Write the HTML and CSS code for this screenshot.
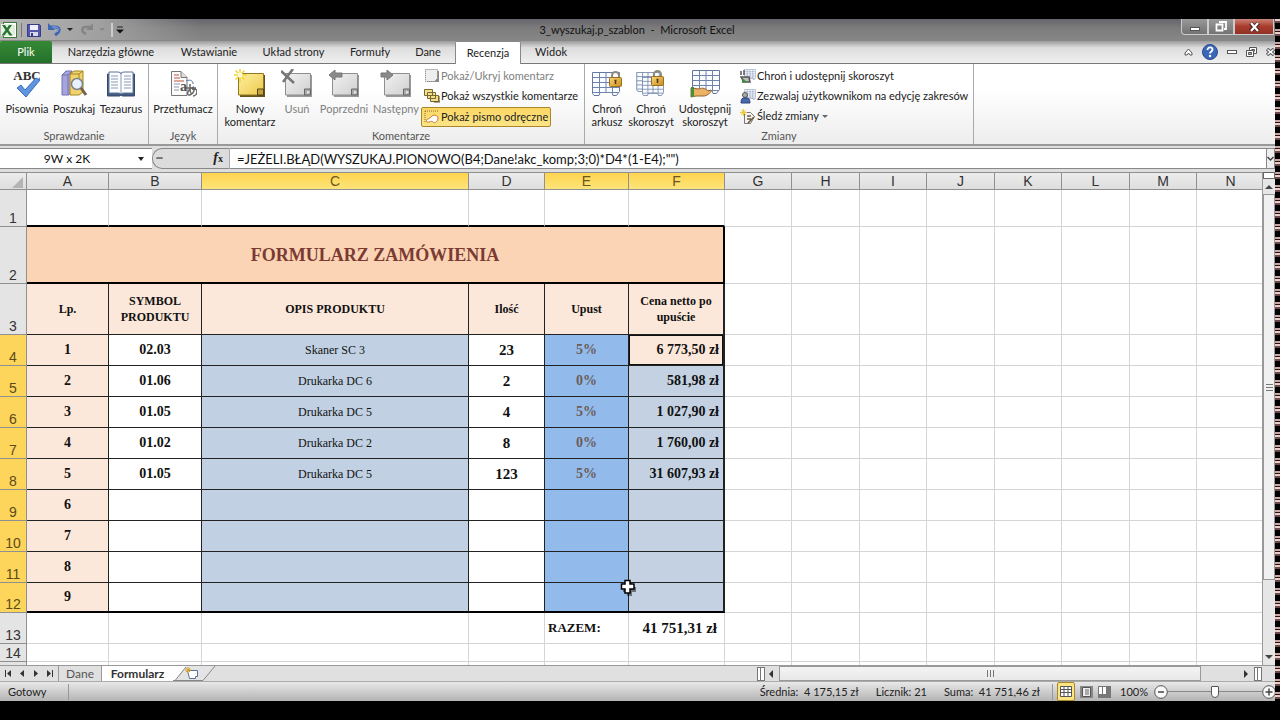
FILE: index.html
```html
<!DOCTYPE html>
<html lang="pl">
<head>
<meta charset="utf-8">
<title>3_wyszukaj.p_szablon - Microsoft Excel</title>
<link rel="stylesheet" href="styles.css">
</head>
<body>
<svg class="defs" width="0" height="0" aria-hidden="true">
  <defs>
    <linearGradient id="gNote" x1="0" y1="0" x2="1" y2="1"><stop offset="0" stop-color="#fdf0a0"/><stop offset="1" stop-color="#edc84c"/></linearGradient>
    <linearGradient id="gGrey" x1="0" y1="0" x2="1" y2="1"><stop offset="0" stop-color="#f2f2f2"/><stop offset="1" stop-color="#cfcfcf"/></linearGradient>
    <linearGradient id="gLock" x1="0" y1="0" x2="1" y2="1"><stop offset="0" stop-color="#f8d878"/><stop offset="1" stop-color="#c98c1c"/></linearGradient>
    <symbol id="note-grey" viewBox="0 0 32 30">
      <path d="M6 6h25v22H6z" fill="#999"/><path d="M4.500 4.500h25v16l-5.500 5.500H4.500z" fill="url(#gGrey)" stroke="#8f8f8f"/><path d="M23.500 26v-6h6v6z" fill="#aaa" stroke="#666"/><path d="M26 22l3 1-3 2" fill="#eee"/>
    </symbol>
    <symbol id="lock" viewBox="0 0 13 16">
      <path d="M3 8V4.500a3.500 3.500 0 0 1 7 0V8" fill="none" stroke="#8c8c7c" stroke-width="2"/><rect x=".5" y="6.500" width="12" height="9" rx="1" fill="url(#gLock)" stroke="#9b6f1e"/><path d="M6.500 9v4M5.500 9.500h2" stroke="#4c3510" stroke-width="1.500"/>
    </symbol>
    <symbol id="sheet" viewBox="0 0 28 24">
      <path d="M.5.5h27v19l-3 4H21l-1-3H8l-1 3H2l-1.500-2z" fill="#fbfcff" stroke="#6478a0"/><path d="M7.500.5v20M14 .5v20M20.500.5v20M.5 5.500h27M.5 10.500h27M.5 15.500h27M1 20.500h26" stroke="#6f84ac"/>
    </symbol>
  </defs>
</svg>

<div class="screen">
<div class="app">
  <header class="titlebar">
    <div class="quick">
      <svg class="xl" width="16" height="16" viewBox="0 0 16 16"><rect x="2.500" y=".5" width="13" height="15" fill="#fff" stroke="#3b7a3b"/><rect y="2" width="12" height="12" fill="#e3f1df"/><path d="M1 3h3l2 3 2-3h3L7.500 8l4 5.500h-3L6 10l-2.500 3.500h-3L4.500 8z" fill="#277430"/><path d="M13 3v10" stroke="#bbd9b4"/></svg>
      <span class="sep"></span>
      <button class="qb" aria-label="Zapisz"><svg width="14" height="14" viewBox="0 0 14 14"><path d="M.5 1.500h12l1 1v11H.5z" fill="#5458ad" stroke="#383b85"/><rect x="3" y="2" width="8" height="5" fill="#eef"/><rect x="3" y="9" width="8" height="4" fill="#d6d8ee"/><rect x="4" y="10" width="2" height="3" fill="#383b85"/></svg></button>
      <button class="qb undo" aria-label="Cofnij"><svg width="14" height="13" viewBox="0 0 14 13"><path d="M3 4h4c6 0 5 5 0 8" fill="none" stroke="#3f67b4" stroke-width="3"/><path d="M0 0v7h7z" fill="#3f67b4"/><path d="M4 4h3c4 0 4 3 2 5" fill="none" stroke="#8fb1e6"/></svg></button>
      <span class="tri"></span>
      <button class="qb redo" aria-label="Ponów"><svg width="14" height="13" viewBox="0 0 14 13"><path d="M10 4H7C1 3 1 9 6 11" fill="none" stroke="#858585" stroke-width="2.500"/><path d="M13 0v7H6z" fill="#858585"/></svg></button>
      <span class="tri dim"></span>
      <span class="sep light"></span>
      <button class="qb more" aria-label="Dostosuj pasek"><svg width="8" height="8" viewBox="0 0 8 8"><path d="M1 1h6" stroke="#222"/><path d="M0 3.500h8l-4 4z" fill="#111"/></svg></button>
    </div>
    <div class="doc-title">3_wyszukaj.p_szablon&nbsp; -&nbsp; Microsoft Excel</div>
    <div class="winbtns">
      <button aria-label="Minimalizuj"><svg width="12" height="10" viewBox="0 0 12 10"><rect x="1.500" y="5.500" width="9" height="3" fill="#fff" stroke="#555"/></svg></button>
      <button aria-label="Przywróć"><svg width="12" height="12" viewBox="0 0 12 12"><path d="M4 1h7v7H9M1.500 3.500h6v6h-6z" fill="none" stroke="#fff" stroke-width="1.800"/></svg></button>
      <button class="close" aria-label="Zamknij"><svg width="11" height="10" viewBox="0 0 11 10"><path d="M1.500 1l8 8M9.500 1l-8 8" stroke="#4a2020" stroke-width="4"/><path d="M2 1l7 8M9 1L2 9" stroke="#fff" stroke-width="2.200"/></svg></button>
    </div>
  </header>

  <nav class="tabs">
    <button class="file">Plik</button>
    <button class="t1">Narzędzia główne</button>
    <button class="t2">Wstawianie</button>
    <button class="t3">Układ strony</button>
    <button class="t4">Formuły</button>
    <button class="t5">Dane</button>
    <button class="active">Recenzja</button>
    <button class="t6">Widok</button>
    <div class="tabtools">
      <button aria-label="Zwiń wstążkę"><svg width="9" height="8" viewBox="0 0 9 8"><path d="M1 5l3.500-4L8 5v2H6L4.500 5 3 7H1z" fill="#fff" stroke="#555"/></svg></button>
      <button aria-label="Pomoc"><svg width="16" height="16" viewBox="0 0 16 16"><circle cx="8" cy="8" r="7.500" fill="#3b67b8" stroke="#294b8c"/><path d="M5.500 6c0-3.500 5-3.200 5-.3C10.500 7.500 8 7.500 8 9.600" fill="none" stroke="#fff" stroke-width="1.800"/><circle cx="8" cy="12" r="1.200" fill="#fff"/></svg></button>
      <button aria-label="Minimalizuj skoroszyt"><svg width="10" height="6" viewBox="0 0 10 6"><rect x=".5" y="1.500" width="9" height="3" fill="#fff" stroke="#555"/></svg></button>
      <button aria-label="Przywróć skoroszyt"><svg width="11" height="10" viewBox="0 0 11 10"><path d="M3.500.5h7v6h-7z" fill="#fff" stroke="#555"/><path d="M5.500 2.500h3v2" fill="none" stroke="#555"/><path d="M.5 3.500h7v6h-7z" fill="#fff" stroke="#555"/><path d="M2.500 5.500h3v2h-3z" fill="#bbb" stroke="#555"/></svg></button>
      <button aria-label="Zamknij skoroszyt"><svg width="9" height="8" viewBox="0 0 9 8"><path d="M1 1l7 6M8 1L1 7" stroke="#555" stroke-width="3.400"/><path d="M1.500 1.500l6 5M7.500 1.500l-6 5" stroke="#fff" stroke-width="1.500"/></svg></button>
    </div>
  </nav>

  <section class="ribbon">
    <div class="group g1">
      <div class="items">
        <button class="big w54"><svg width="28" height="30" viewBox="0 0 28 30"><text x="14" y="11" class="abc">ABC</text><path d="M4 19l4-3 4 5L23 9l4 2-14 17z" fill="#5f94de" stroke="#3d6fc0"/></svg><span>Pisownia</span></button>
        <button class="big w40"><svg width="28" height="30" viewBox="0 0 28 30"><path d="M2 6l4-4h6v20l-3 4H2z" fill="#a6a4dc" stroke="#7370b4"/><path d="M2 6h6v19M8 6l4-4" fill="none" stroke="#7370b4"/><path d="M10 5l4-3h9v21l-4 3h-9z" fill="#f0d36a" stroke="#a68624"/><path d="M10 5h9l4-3M19 5v8" fill="none" stroke="#a68624"/><circle cx="17" cy="15" r="5.500" fill="#e8f2fc" stroke="#7d838c" stroke-width="1.500"/><path d="M21 19l5 7" stroke="#74624a" stroke-width="3"/></svg><span>Poszukaj</span></button>
        <button class="big w54"><svg width="30" height="30" viewBox="0 0 30 30"><path d="M1.500 5v22h12l1.500-1 1.500 1h12V5z" fill="#435981" stroke="#35486b"/><path d="M3 3h9q3 0 3 2 0-2 3-2h9v21h-9q-3 0-3 1 0-1-3-1H3z" fill="#fcfdff" stroke="#60749b"/><path d="M15 5v20M5 7h7M5 10h7M5 13h7M5 16h7M5 19h7M18 7h7M18 10h7M18 13h7M18 16h7M18 19h7" stroke="#8c9ab2"/></svg><span>Tezaurus</span></button>
      </div>
      <div class="caption">Sprawdzanie</div>
    </div>
    <div class="group g2">
      <div class="items">
        <button class="big w68"><svg width="28" height="30" viewBox="0 0 28 30"><path d="M2.500 2.500H12l6 6v18H2.500z" fill="#fcfcfc" stroke="#777"/><path d="M12 2.500v6h6" fill="#ddd" stroke="#777"/><path d="M5 6h5M5 9h6M5 12h10" stroke="#c45038"/><path d="M5 15h6M5 18h5M5 21h5" stroke="#8696b8"/><text x="11" y="22" class="lat">a</text><path d="M17 19h10M21 15c0 7 0 9 2 10M25 18c-7 2-8 9-4 8s5-7 3-6 4-1 4 2-2 5-4 5" fill="none" stroke="#666" stroke-width="1.500"/><path d="M17 12c5-2 7 0 7 3" fill="none" stroke="#567aa8"/></svg><span>Przetłumacz</span></button>
      </div>
      <div class="caption">Język</div>
    </div>
    <div class="group g3">
      <div class="items">
        <button class="big w64"><svg width="32" height="30" viewBox="0 0 32 30"><path d="M6 6h25v22H6z" fill="#61521f"/><path d="M4.500 4.500h25v16l-5.500 5.500H4.500z" fill="url(#gNote)" stroke="#92771e"/><path d="M23.500 26v-6h6v6z" fill="#c7a23a" stroke="#554512"/><path d="M6 0v13M0 6h13M1.500 1.500l9 9M10.500 1.500l-9 9" stroke="#f5d43a" stroke-width="1.500"/><circle cx="6" cy="6" r="2.500" fill="#fffbd0"/></svg><span>Nowy<br>komentarz</span></button>
        <button class="big w30 off"><svg width="32" height="30" viewBox="0 0 32 30"><use href="#note-grey"/><path d="M0 2l13 12M12 0L2 13" stroke="#777" stroke-width="2.500"/></svg><span>Usuń</span></button>
        <button class="big w64 off"><svg width="32" height="30" viewBox="0 0 32 30"><use href="#note-grey"/><path d="M1 6l6-5v3h7v4H7v3z" fill="#8b8b8b" stroke="#777"/></svg><span>Poprzedni</span></button>
        <button class="big w40 off"><svg width="32" height="30" viewBox="0 0 32 30"><use href="#note-grey"/><path d="M13 6L7 1v3H1v4h6v3z" fill="#8b8b8b" stroke="#777"/></svg><span>Następny</span></button>
        <div class="stack">
          <button class="small off"><svg width="16" height="14" viewBox="0 0 16 14"><path d="M3 2h12v11H3z" fill="#888"/><path d="M1.500.5h12v9l-3 3h-9z" fill="#eee" stroke="#777" stroke-dasharray="1 1"/></svg>Pokaż/Ukryj komentarz</button>
          <button class="small"><svg width="16" height="14" viewBox="0 0 16 14"><path d="M.5.500h8v6h-8zM3.500 3.500h8v6h-8zM6.500 6.500h8v6h-8z" fill="#f4e08c" stroke="#76682f"/><path d="M10 13h6V7" fill="none" stroke="#5a4e1c"/></svg>Pokaż wszystkie komentarze</button>
          <button class="small pressed"><svg width="16" height="14" viewBox="0 0 16 14"><path d="M1 1h13M1 1v12" stroke="#8d6c2a" stroke-dasharray="1 1"/><path d="M3 12c-2-4 2-2 4-5s7-2 7 1-3 6-5 4-4 1-6 0z" fill="#fff" stroke="#c67b3c"/></svg>Pokaż pismo odręczne</button>
        </div>
      </div>
      <div class="caption">Komentarze</div>
    </div>
    <div class="group g4">
      <div class="items">
        <button class="big w44"><svg width="30" height="30" viewBox="0 0 30 30"><use href="#sheet" y="3" width="28" height="24"/><use href="#lock" x="17" y="2" width="13" height="16"/></svg><span>Chroń<br>arkusz</span></button>
        <button class="big w44"><svg width="30" height="30" viewBox="0 0 30 30"><use href="#sheet" y="3" width="24" height="20"/><use href="#sheet" x="6" y="8" width="22" height="19"/><use href="#lock" x="15" y="1" width="13" height="16"/></svg><span>Chroń<br>skoroszyt</span></button>
        <button class="big w64"><svg width="30" height="30" viewBox="0 0 30 30"><use href="#sheet" x="2" width="28" height="26"/><path d="M1 19l8 1c4-2 7 0 9 2l3-1c2 1-4 6-7 6H6l-5 1z" fill="#ecb366" stroke="#97622b"/><path d="M1 18h3v10H1z" fill="#44933a"/></svg><span>Udostępnij<br>skoroszyt</span></button>
        <div class="stack">
          <button class="small"><svg width="16" height="15" viewBox="0 0 16 15"><use href="#sheet" x="4" width="12" height="11"/><path d="M1 2v4M4 1v5M1 8h8l1 5H4z" stroke="#555" stroke-width="1.500" fill="#bbb"/><path d="M2 9l5 4-5 1z" fill="#3d8a43"/></svg>Chroń i udostępnij skoroszyt</button>
          <button class="small"><svg width="16" height="15" viewBox="0 0 16 15"><use href="#sheet" x="4" width="12" height="11"/><circle cx="5" cy="6" r="2.500" fill="#aaa" stroke="#555"/><path d="M1 14q0-6 4-5 5-1 5 5z" fill="#4868ac" stroke="#2d427a"/></svg>Zezwalaj użytkownikom na edycję zakresów</button>
          <button class="small"><svg width="16" height="15" viewBox="0 0 16 15"><path d="M4.500 3.500h6l4 4-4 7h-6z" fill="#f4f4f4" stroke="#777"/><path d="M7 7h4M7 10h4M8 14l6-6" stroke="#6b5b38" stroke-width="1.500"/><path d="M3.500 0v7M0 3.500h7M1 1l5 5M6 1L1 6" stroke="#ecc93b"/></svg>Śledź zmiany<i class="tri small-tri"></i></button>
        </div>
      </div>
      <div class="caption">Zmiany</div>
    </div>
  </section>

  <section class="formula">
    <input class="namebox" aria-label="Pole nazwy" value="9W x 2K">
    <span class="name-tri"></span>
    <div class="fxarea"><span class="knob"></span><button class="fx" aria-label="Wstaw funkcję"><i>f</i><sub>x</sub></button></div>
    <input class="finput" aria-label="Pasek formuły" value="=JEŻELI.BŁĄD(WYSZUKAJ.PIONOWO(B4;Dane!akc_komp;3;0)*D4*(1-E4);&quot;&quot;)">
    <button class="expand" aria-label="Rozwiń"><svg width="7" height="6" viewBox="0 0 7 6"><path d="M.5 1l3 3 3-3" fill="none" stroke="#444" stroke-width="1.500"/></svg></button>
  </section>

  <main class="work">
    <div class="gridwrap">
    <table class="grid">
      <colgroup><col class="c-h"><col class="c-a"><col class="c-b"><col class="c-c"><col class="c-d"><col class="c-e"><col class="c-f"><col class="c-g"><col class="c-w"><col class="c-g"><col class="c-w"><col class="c-g"><col class="c-w"><col class="c-g"><col class="c-w"></colgroup>
      <thead><tr><th class="corner"><svg width="11" height="11" viewBox="0 0 11 11"><path d="M11 0v11H0z" fill="#b4b4b4"/></svg></th><th>A</th><th>B</th><th class="on">C</th><th>D</th><th class="on">E</th><th class="on">F</th><th>G</th><th>H</th><th>I</th><th>J</th><th>K</th><th>L</th><th>M</th><th>N</th></tr></thead>
      <tbody>
        <tr class="r1"><th>1</th><td></td><td></td><td></td><td></td><td></td><td></td><td></td><td></td><td></td><td></td><td></td><td></td><td></td><td></td></tr>
        <tr class="r2"><th>2</th><td colspan="6" class="ftitle">FORMULARZ ZAMÓWIENIA</td><td></td><td></td><td></td><td></td><td></td><td></td><td></td><td></td></tr>
        <tr class="r3"><th>3</th><td>Lp.</td><td>SYMBOL PRODUKTU</td><td>OPIS PRODUKTU</td><td>Ilość</td><td>Upust</td><td>Cena netto po upuście</td><td></td><td></td><td></td><td></td><td></td><td></td><td></td><td></td></tr>
        <tr class="d"><th>4</th><td>1</td><td>02.03</td><td>Skaner SC 3</td><td>23</td><td>5%</td><td class="cur">6 773,50 zł</td><td></td><td></td><td></td><td></td><td></td><td></td><td></td><td></td></tr>
        <tr class="d"><th>5</th><td>2</td><td>01.06</td><td>Drukarka DC 6</td><td>2</td><td>0%</td><td>581,98 zł</td><td></td><td></td><td></td><td></td><td></td><td></td><td></td><td></td></tr>
        <tr class="d"><th>6</th><td>3</td><td>01.05</td><td>Drukarka DC 5</td><td>4</td><td>5%</td><td>1 027,90 zł</td><td></td><td></td><td></td><td></td><td></td><td></td><td></td><td></td></tr>
        <tr class="d"><th>7</th><td>4</td><td>01.02</td><td>Drukarka DC 2</td><td>8</td><td>0%</td><td>1 760,00 zł</td><td></td><td></td><td></td><td></td><td></td><td></td><td></td><td></td></tr>
        <tr class="d"><th>8</th><td>5</td><td>01.05</td><td>Drukarka DC 5</td><td>123</td><td>5%</td><td>31 607,93 zł</td><td></td><td></td><td></td><td></td><td></td><td></td><td></td><td></td></tr>
        <tr class="d"><th>9</th><td>6</td><td></td><td></td><td></td><td></td><td></td><td></td><td></td><td></td><td></td><td></td><td></td><td></td><td></td></tr>
        <tr class="d"><th>10</th><td>7</td><td></td><td></td><td></td><td></td><td></td><td></td><td></td><td></td><td></td><td></td><td></td><td></td><td></td></tr>
        <tr class="d"><th>11</th><td>8</td><td></td><td></td><td></td><td></td><td></td><td></td><td></td><td></td><td></td><td></td><td></td><td></td><td></td></tr>
        <tr class="d last"><th>12</th><td>9</td><td></td><td></td><td></td><td></td><td class="pointer-cell"><svg class="pointer" width="18" height="18" viewBox="0 0 18 18"><path d="M7 4h5v4h4v5h-4v4H7v-4H3V8h4z" fill="#000" opacity=".45"/><path d="M5 1.500h5V5h4v5h-4v4H5v-4H1.500V5H5z" fill="#fff" stroke="#000" stroke-width="1.500"/></svg></td><td></td><td></td><td></td><td></td><td></td><td></td><td></td><td></td></tr>
        <tr class="r13"><th>13</th><td></td><td></td><td></td><td></td><td class="sumlabel">RAZEM:</td><td class="sum">41 751,31 zł</td><td></td><td></td><td></td><td></td><td></td><td></td><td></td><td></td></tr>
        <tr class="r14"><th>14</th><td></td><td></td><td></td><td></td><td></td><td></td><td></td><td></td><td></td><td></td><td></td><td></td><td></td><td></td></tr>
        <tr class="r15"><th></th><td></td><td></td><td></td><td></td><td></td><td></td><td></td><td></td><td></td><td></td><td></td><td></td><td></td><td></td></tr>
      </tbody>
    </table>
    </div>
    <div class="vscroll"><span class="split"></span><button class="arrow up" aria-label="W górę"></button><div class="vthumb"><i></i></div><button class="arrow down" aria-label="W dół"></button></div>
  </main>

  <footer class="sheetbar">
    <div class="navs">
      <button aria-label="Pierwszy"><svg width="8" height="7" viewBox="0 0 8 7"><path d="M1 0h1v7H1zM7 0v7L3 3.500z" fill="#333"/></svg></button>
      <button aria-label="Poprzedni arkusz"><svg width="8" height="7" viewBox="0 0 8 7"><path d="M6 0v7L2 3.500z" fill="#333"/></svg></button>
      <button aria-label="Następny arkusz"><svg width="8" height="7" viewBox="0 0 8 7"><path d="M2 0v7l4-3.500z" fill="#333"/></svg></button>
      <button aria-label="Ostatni"><svg width="8" height="7" viewBox="0 0 8 7"><path d="M6 0h1v7H6zM1 0v7l4-3.500z" fill="#333"/></svg></button>
    </div>
    <button class="stab">Dane</button>
    <button class="stab sel">Formularz</button>
    <button class="newsheet" aria-label="Wstaw arkusz"><svg width="43" height="16" viewBox="0 0 43 16"><path d="M0 0h42L30 14.500H2L13 0z" fill="#e4e4e4"/><path d="M0 0h13L2 14.500H0z" fill="#fff"/><path d="M0 14.500h2L13 1M2 14.500h28L42 0" fill="none" stroke="#888"/><path d="M14.500 4.500h10v6h-2v2h-6z" fill="#fff" stroke="#5c6f9a"/><path d="M15 1v6M12 4h6M13 2l4 4M17 2l-4 4" stroke="#d9a520"/></svg></button>
    <div class="hscroll"><span class="vsplit"></span><button class="arrow left" aria-label="W lewo"></button><div class="hthumb"><i></i></div><button class="arrow right" aria-label="W prawo"></button><span class="vsplit"></span></div>
  </footer>

  <footer class="status">
    <span class="ready">Gotowy</span>
    <div class="stats"><span>Średnia:&nbsp; 4 175,15 zł</span><span>Licznik: 21</span><span>Suma:&nbsp; 41 751,46 zł</span></div>
    <div class="views">
      <button class="vsel" aria-label="Normalny"><svg width="12" height="11" viewBox="0 0 12 11"><path d="M.5.5h11v10H.5zM.5 3.500h11M.5 6.500h11M4 .5v10M8 .5v10" fill="#fff" stroke="#555"/></svg></button>
      <button aria-label="Układ strony"><svg width="13" height="12" viewBox="0 0 13 12"><path fill="#888" d="M0 0h13v12H0z"/><path d="M2.500 1.500h8v9h-8z" fill="#eee" stroke="#555"/><path d="M5 4h4M5 6h4M5 8h4" stroke="#666"/></svg></button>
      <button aria-label="Podział stron"><svg width="13" height="12" viewBox="0 0 13 12"><path fill="#777" d="M0 0h13v12H0z"/><path d="M1 1h3v7H1zM5 1h3v7H5z" fill="#fff"/></svg></button>
    </div>
    <span class="pct">100%</span>
    <button class="round" aria-label="Pomniejsz"><svg width="14" height="14" viewBox="0 0 14 14"><circle cx="7" cy="7" r="6.300" fill="#f8f8f8" stroke="#555"/><path d="M4 7h6" stroke="#444" stroke-width="1.500"/></svg></button>
    <input class="zoom" type="range" min="0" max="100" value="50" aria-label="Powiększenie">
    <button class="round plus" aria-label="Powiększ"><svg width="14" height="14" viewBox="0 0 14 14"><circle cx="7" cy="7" r="6.300" fill="#f8f8f8" stroke="#555"/><path d="M3.500 7h7M7 3.500v7" stroke="#444" stroke-width="1.500"/></svg></button>
  </footer>
</div>
<div class="edge"></div>
</div>
</body>
</html>
```
FILE: styles.css
```css
* { box-sizing: border-box; }
body { margin: 0; background: #000; font: 11px/16px Lato, "Open Sans", sans-serif; color: #222; }
button, input { font: inherit; color: inherit; margin: 0; padding: 0; border: 0; background: none; border-radius: 0; }
button { white-space: nowrap; }
svg { display: block; flex: none; }
.defs { position: absolute; }
.screen { display: flex; min-height: 100vh; padding: 19px 0; overflow: hidden; }
.app { flex: 1; min-width: 0; display: flex; flex-direction: column; background: #e6e6e6; overflow: hidden; }
.edge { width: 5px; background: repeating-linear-gradient(#e8cfc8 0 2px, #70484c 2px 4px, #000 4px 10px, #c9a7a7 10px 12px, #2a1010 12px 13px); }

.titlebar { display: flex; align-items: flex-start; height: 22px; background: linear-gradient(#64646c, #7c7c7c 40%, #878787); }
.quick { display: flex; align-items: center; height: 21px; flex: 1; background: linear-gradient(90deg, #b4b4b4, #a0a0a0 100px, transparent 200px); }
.xl { margin-left: 1px; }
.sep { width: 1px; height: 14px; margin: 0 5px 0 4px; background: #777; }
.sep.light { width: 2px; margin: 0 3px 0 6px; background: #ccc; }
.undo { margin-left: 7px; }
.tri { width: 0; height: 0; border: 3px solid transparent; border-top: 3px solid #222; border-bottom: 0; margin-left: 5px; }
.redo { margin-left: 7px; }
.dim { border-top-color: #888; }
.doc-title { line-height: 22px; color: #111; }
.winbtns { display: flex; flex: 1; justify-content: flex-end; padding-right: 1px; }
.winbtns button { display: flex; align-items: center; justify-content: center; width: 26px; height: 16px; border: 1px solid #ccc; border-top: 0; background: linear-gradient(#999, #737373); }
.winbtns button:first-child { border-bottom-left-radius: 4px; width: 27px; }
.winbtns .close { width: 40px; background: linear-gradient(#c98478, #a93b2b 50%, #8f3327); }

.tabs { display: flex; align-items: stretch; height: 23px; border-bottom: 1px solid #777; background: linear-gradient(#9a9a9a, #dcdcdc 30%, #f0f0f0); }
.tabs > button { text-align: center; }
.file { width: 52px; background: linear-gradient(#358a35, #25702b); color: #fff; margin-right: 7px; border-radius: 2px 2px 0 0; }
.t1 { width: 104px; }
.t2 { width: 92px; }
.t3 { width: 77px; }
.t4 { width: 76px; }
.t5 { width: 40px; margin-right: 7px; }
.tabs .active { width: 66px; background: #fff; border: 1px solid #888; border-bottom: 0; border-radius: 2px 2px 0 0; margin-bottom: -1px; }
.t6 { width: 60px; }
.tabtools { display: flex; align-items: center; gap: 9px; margin-left: auto; }

.ribbon { display: flex; height: 82px; background: linear-gradient(#fff 30%, #ededed); border-bottom: 2px solid #999; }
.group { display: flex; flex-direction: column; border-right: 1px solid #aaa; }
.g1 { width: 149px; }
.g2 { width: 69px; }
.g3 { width: 367px; }
.g4 { width: 389px; }
.items { display: flex; flex: 1; }
.big { display: flex; flex: none; flex-direction: column; align-items: center; padding-top: 5px; line-height: 13px; text-align: center; gap: 3px; }
.off { color: #808080; }
.w30 { width: 30px; }
.w40 { width: 40px; }
.w44 { width: 44px; }
.w54 { width: 54px; }
.w64 { width: 64px; }
.w68 { width: 68px; }
.caption { line-height: 16px; text-align: center; color: #555; }
.abc { font: bold 13px "Liberation Serif", serif; text-anchor: middle; fill: #333; }
.lat { font: bold 14px "Liberation Serif", serif; fill: #555; }
.stack { display: flex; flex-direction: column; align-items: flex-start; padding: 2px 0 0 5px; }
.g4 .stack { padding-left: 0; }
.small { display: flex; align-items: center; gap: 1px; height: 20px; padding: 0 2px; border: 1px solid transparent; border-radius: 2px; }
.pressed { background: linear-gradient(#fbd663, #fce587); border-color: #a98728; margin-top: 1px; }
.small-tri { border-top-color: #666; margin-left: 2px; }

.formula { display: flex; height: 26px; padding: 2px 0 3px; background: #dedede; }
.namebox { width: 134px; text-align: center; background: #fff; font-size: 12px; color: #111; border-top: 1px solid #888; border-bottom: 1px solid #888; }
.name-tri { width: 18px; border: solid #888; border-width: 1px 0; background: #fff; display: flex; align-items: center; }
.name-tri::before { content: ""; margin-left: 4px; border: 3px solid transparent; border-top: 4px solid #222; border-bottom: 0; }
.fxarea { display: flex; align-items: center; width: 78px; border: 1px solid #888; border-right-color: #aaa; border-radius: 10px 0 0 10px; background: #dcdcdc; }
.knob { width: 7px; height: 3px; margin-left: 3px; border-top: 2px solid #777; border-radius: 2px; }
.fx { margin-left: auto; margin-right: 6px; font: bold 14px/18px "Liberation Serif", serif; }
.fx sub { font-size: 10px; vertical-align: baseline; }
.finput { flex: 1; min-width: 0; padding-left: 7px; background: #fff; font-size: 13px; color: #111; border: solid #888; border-width: 1px 0; }
.expand { width: 9px; border: 1px solid #888; background: #eee; display: flex; align-items: center; justify-content: center; }

.work { display: flex; height: 493px; }
.gridwrap { flex: 1; min-width: 0; overflow: hidden; background: #fff; }
.grid { table-layout: fixed; width: 1265px; border-collapse: separate; border-spacing: 0; font-family: "Liberation Serif", serif; font-weight: bold; color: #111; }
.c-h { width: 27px; }
.c-a { width: 82px; }
.c-b { width: 93px; }
.c-c { width: 267px; }
.c-d { width: 76px; }
.c-e { width: 84px; }
.c-f { width: 96px; }
.c-g { width: 67px; }
.c-w { width: 68px; }
.grid th, .grid td { padding: 0; overflow: hidden; border: solid #d4d4d4; border-width: 0 1px 1px 0; }
.grid th { font: 14px/16px "Liberation Sans", sans-serif; background: #e4e4e4; border-color: #909090; color: #333; }
.grid thead th { height: 18px; border-top: 1px solid #909090; background: linear-gradient(#ececec, #dedede); }
.grid thead .on { background: linear-gradient(#ffd44e, #fde57a); color: #6c5520; }
.grid thead .corner { padding: 2px 3px 0 12px; }
.grid tbody th { vertical-align: bottom; }
.grid .d th { background: #fcd55a; color: #5e4a18; }
.r1 { height: 37px; }
.r1 td:nth-child(-n+7) { border-bottom: 2px solid #000; }
.r2 { height: 57px; }
.grid .ftitle { background: #fad4b4; color: #7b3a32; font-size: 18px; text-align: center; border-right: 2px solid #000; border-bottom: 2px solid #000; }
.r3 { height: 51px; }
.grid .r3 td:nth-child(-n+7) { background: #fce8da; text-align: center; font-size: 12px; border-color: #222; }
.grid .r3 td:nth-child(7), .grid .d td:nth-child(7) { border-right-width: 2px; }
.d { height: 31px; }
.grid .d td:nth-child(-n+7) { text-align: center; font-size: 14px; border-color: #222; }
.grid .d td:nth-child(2) { background: #fce8da; }
.grid .d td:nth-child(4) { background: #c1d1e3; font-size: 12px; font-weight: normal; }
.grid .d td:nth-child(5) { font-size: 15px; }
.grid .d td:nth-child(6) { background: #92bbec; color: #6c5b58; }
.grid .d td:nth-child(7) { background: #c3d1e3; text-align: right; padding-right: 4px; }
.grid .d .cur:nth-child(7) { background: #fce8da; box-shadow: inset 0 0 0 1px #111; }
.last { height: 30px; }
.grid .last td:nth-child(-n+7) { border-bottom: 2px solid #000; }
.grid .pointer-cell { position: relative; overflow: visible; }
.pointer { position: absolute; left: -9px; top: -4px; }
.r13 { height: 31px; font-size: 15px; }
.grid .sumlabel { padding-left: 3px; font-size: 13px; }
.grid .sum { text-align: right; padding-right: 7px; }
.r14 { height: 18px; }
.r15 { height: 5px; }

.vscroll { display: flex; flex-direction: column; width: 13px; border-left: 1px solid #999; background: #e6e6e6; }
.split { height: 7px; border: 1px solid #666; background: #fff; }
.arrow { border: 4px solid transparent; width: 0; height: 0; }
.up { border-bottom: 4px solid #444; border-top: 0; margin: 6px 2px 5px; }
.down { border-top: 4px solid #444; border-bottom: 0; margin: 0 2px 6px; }
.vthumb { display: flex; align-items: center; justify-content: center; height: 386px; margin-bottom: auto; border: 1px solid #999; background: #f0f0f0; }
.vthumb i { width: 7px; height: 7px; background: repeating-linear-gradient(#777 0 1px, transparent 1px 3px); }

.sheetbar { display: flex; height: 17px; border-top: 1px solid #999; border-bottom: 1px solid #aaa; background: #e0e0e0; }
.navs { display: flex; align-items: center; gap: 6px; width: 59px; padding-left: 4px; border-right: 1px solid #999; }
.stab { width: 43px; border-right: 1px solid #999; font-size: 12px; line-height: 15px; color: #555; }
.sel { width: 71px; background: #fff; border-right: 0; font-weight: bold; color: #333; }
.hscroll { display: flex; align-items: center; width: 505px; margin: 0 13px 0 auto; }
.vsplit { width: 8px; height: 14px; border: 1px solid #777; background: linear-gradient(90deg, #fff 2px, #777 2px 3px, #fff 3px); }
.left { border-right: 4px solid #333; border-left: 0; margin: 0 6px 0 4px; }
.right { border-left: 4px solid #333; border-right: 0; margin: 0 6px 0 auto; }
.hthumb { display: flex; flex: 0 1 422px; align-items: center; justify-content: center; height: 15px; border: 1px solid #999; background: linear-gradient(#f4f4f4, #e8e8e8); }
.hthumb i { width: 7px; height: 7px; background: repeating-linear-gradient(90deg, #777 0 1px, transparent 1px 3px); }

.status { display: flex; align-items: center; height: 19px; background: linear-gradient(#e8e8e8, #b4b4b4); overflow: hidden; }
.ready { width: 69px; padding-left: 8px; border-right: 1px solid #999; }
.stats { display: flex; gap: 17px; margin-left: auto; padding-right: 12px; border-right: 1px solid #999; }
.views { display: flex; align-items: center; gap: 5px; padding: 0 9px 0 4px; }
.vsel { padding: 3px 2px; border: 1px solid #a98728; border-radius: 2px; background: #fbe583; }
.pct { width: 34px; }
.zoom { appearance: none; width: 94px; height: 14px; background: linear-gradient(#888, #888) center / 100% 1px no-repeat; }
.zoom::-webkit-slider-thumb { appearance: none; width: 8px; height: 12px; border: 1px solid #555; border-radius: 1px 1px 4px 4px; background: #fff; }
.plus { margin-right: -1px; }
```
